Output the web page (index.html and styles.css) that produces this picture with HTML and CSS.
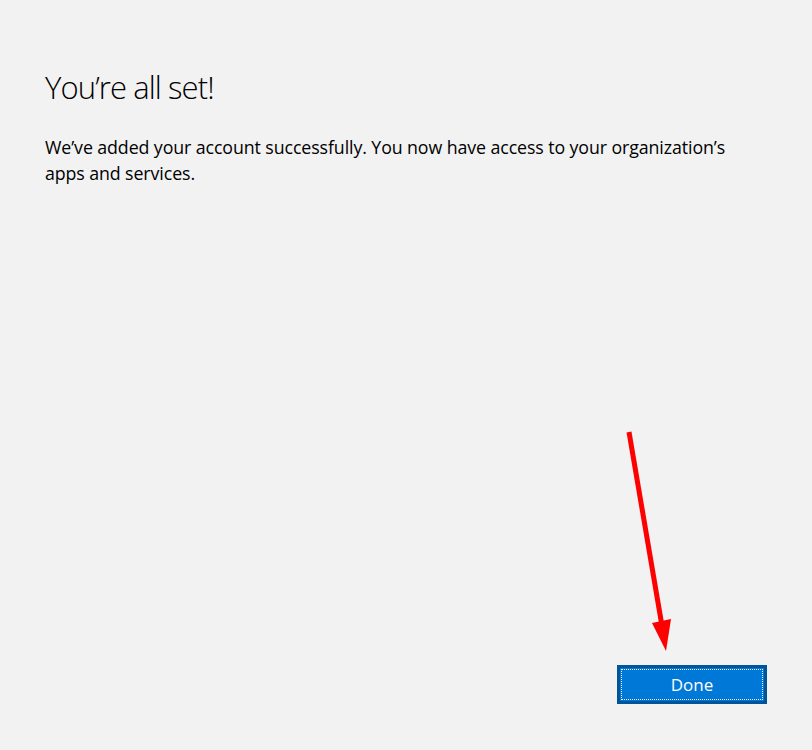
FILE: index.html
```html
<!DOCTYPE html>
<html lang="en">
<head>
<meta charset="utf-8">
<title>You're all set!</title>
<link rel="stylesheet" href="styles.css">
</head>
<body>
<div class="page">
  <main class="content">
    <h1 class="title">You’re all set!</h1>
    <p class="message">We’ve added your account successfully. You now have access to your organization’s apps and services.</p>
  </main>
  <footer class="footer">
    <button class="btn-primary" type="button">Done</button>
  </footer>
  <svg class="annotation" width="812" height="750" viewBox="0 0 812 750" aria-hidden="true">
    <line x1="629" y1="432" x2="662" y2="626" stroke="#ff0000" stroke-width="5"/>
    <polygon points="652,623 671,619 666,651" fill="#ff0000"/>
  </svg>
</div>
</body>
</html>
```

FILE: styles.css
```css
* {
  box-sizing: border-box;
}

html, body {
  margin: 0;
  padding: 0;
  background: #f2f2f2;
}

body {
  font-family: "Open Sans", "Noto Sans", "Liberation Sans", sans-serif;
  color: #000;
}

.page {
  position: relative;
  width: 812px;
  height: 750px;
  display: flex;
  flex-direction: column;
  padding: 66px 45px 46px 45px;
  overflow: hidden;
}

.content {
  flex: 1;
}

.title {
  margin: 0;
  font-size: 31px;
  font-weight: 300;
  line-height: 42px;
  letter-spacing: -0.9px;
  color: #000;
}

.message {
  margin: 26px 0 0 0;
  max-width: 710px;
  font-size: 17.8px;
  line-height: 26px;
  font-weight: 400;
  letter-spacing: -0.1px;
}

.footer {
  display: flex;
  justify-content: flex-end;
}

.btn-primary {
  width: 150px;
  height: 39px;
  padding: 0 0 1px 0;
  background: #0078d7;
  border: 3px solid #00549a;
  color: #fff;
  font-family: "Open Sans", "Noto Sans", "Liberation Sans", sans-serif;
  font-size: 17px;
  font-weight: 400;
  outline: 1px dotted #ffffff;
  outline-offset: -5px;
}

.annotation {
  position: absolute;
  left: 0;
  top: 0;
  pointer-events: none;
}
```
